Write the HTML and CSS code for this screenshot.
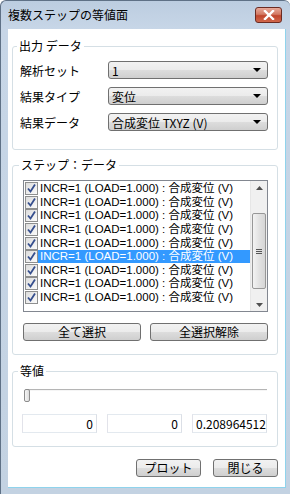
FILE: index.html
```html
<!DOCTYPE html>
<html lang="ja">
<head>
    <meta charset="UTF-8">
    <title>複数ステップの等値面</title>
    <link rel="stylesheet" href="styles.css">
</head>
<body>
<div class="window">
    <div class="titlebar">
        <span class="title">複数ステップの等値面</span>
        <button class="close-btn">
            <svg width="12" height="10" viewBox="0 0 12 10"><path d="M2 1 L10 9 M10 1 L2 9" stroke="#fff" stroke-width="2.4" stroke-linecap="square"/></svg>
        </button>
    </div>

    <div class="client">
        <!-- 出力 データ -->
        <fieldset class="group group-output">
            <legend>出力 データ</legend>
            <div class="field-row">
                <label>解析セット</label>
                <div class="combo"><span>1</span><i class="arrow"></i></div>
            </div>
            <div class="field-row">
                <label>結果タイプ</label>
                <div class="combo"><span>変位</span><i class="arrow"></i></div>
            </div>
            <div class="field-row">
                <label>結果データ</label>
                <div class="combo"><span>合成変位 TXYZ (V)</span><i class="arrow"></i></div>
            </div>
        </fieldset>

        <!-- ステップ : データ -->
        <fieldset class="group group-steps">
            <legend>ステップ：データ</legend>
            <div class="listbox">
                <ul class="items">
                    <li><i class="check"></i><span>INCR=1 (LOAD=1.000) : 合成変位 (V)</span></li>
                    <li><i class="check"></i><span>INCR=1 (LOAD=1.000) : 合成変位 (V)</span></li>
                    <li><i class="check"></i><span>INCR=1 (LOAD=1.000) : 合成変位 (V)</span></li>
                    <li><i class="check"></i><span>INCR=1 (LOAD=1.000) : 合成変位 (V)</span></li>
                    <li><i class="check"></i><span>INCR=1 (LOAD=1.000) : 合成変位 (V)</span></li>
                    <li class="selected"><i class="check"></i><span>INCR=1 (LOAD=1.000) : 合成変位 (V)</span></li>
                    <li><i class="check"></i><span>INCR=1 (LOAD=1.000) : 合成変位 (V)</span></li>
                    <li><i class="check"></i><span>INCR=1 (LOAD=1.000) : 合成変位 (V)</span></li>
                    <li><i class="check"></i><span>INCR=1 (LOAD=1.000) : 合成変位 (V)</span></li>
                </ul>
                <div class="scrollbar">
                    <div class="sb-arrow"><svg width="7" height="4" viewBox="0 0 7 4"><path d="M0 4 L3.5 0 L7 4 Z" fill="#505050"/></svg></div>
                    <div class="sb-track">
                        <div class="sb-thumb"><i></i><i></i><i></i></div>
                    </div>
                    <div class="sb-arrow"><svg width="7" height="4" viewBox="0 0 7 4"><path d="M0 0 L3.5 4 L7 0 Z" fill="#505050"/></svg></div>
                </div>
            </div>
            <div class="btn-row">
                <button class="btn">全て選択</button>
                <button class="btn">全選択解除</button>
            </div>
        </fieldset>

        <!-- 等値 -->
        <fieldset class="group group-value">
            <legend>等値</legend>
            <div class="slider">
                <div class="slider-track"></div>
                <div class="slider-thumb"></div>
            </div>
            <div class="value-row">
                <div class="textbox">0</div>
                <div class="textbox">0</div>
                <div class="textbox">0.208964512</div>
            </div>
        </fieldset>

        <div class="footer">
            <button class="btn btn-small">プロット</button>
            <button class="btn btn-small">閉じる</button>
        </div>
    </div>
</div>
</body>
</html>
```

FILE: styles.css
```css
* {
    box-sizing: border-box;
}

body {
    margin: 0;
    font-family: "Noto Sans CJK JP", "Liberation Sans", sans-serif;
    font-size: 12px;
    color: #000;
    background: #fff;
}

/* ウィンドウ枠 */
.window {
    width: 290px;
    height: 494px;
    display: flex;
    flex-direction: column;
    background: linear-gradient(to bottom, #bccde0, #c7d6e7 28px, #c3d2e2);
    border-top: 1px solid #5f7186;
    border-left: 1px solid #5f7186;
    border-radius: 6px 6px 0 0;
}

.titlebar {
    height: 28px;
    display: flex;
    align-items: center;
    justify-content: space-between;
    padding: 0 8px 0 7px;
}

.title {
    line-height: 14px;
    color: #000;
}

.close-btn {
    width: 27px;
    height: 16px;
    padding: 0;
    display: flex;
    align-items: center;
    justify-content: center;
    border: 1px solid #6b2b22;
    border-radius: 3px;
    background: linear-gradient(to bottom, #e8a99a, #d27a64 45%, #c0452c 55%, #d0684c);
}

.client {
    flex: 1;
    margin: 0 4px 6px 7px;
    background: #fff;
    border-right: 1px solid #8fd3ec;
    border-bottom: 1px solid #8fd3ec;
    padding: 10px 7px 0 4px;
    display: flex;
    flex-direction: column;
}

/* グループボックス */
.group {
    margin: 0;
    border: 1px solid #d5dfe5;
    border-radius: 3px;
}

.group legend {
    padding: 0 2px;
    margin-left: -3px;
    line-height: 14px;
}

.group-output {
    padding: 8px 9px 18px 7px;
}

.field-row {
    display: flex;
    align-items: center;
    height: 18px;
    margin-bottom: 8px;
}

.field-row:last-child {
    margin-bottom: 0;
}

.field-row label {
    flex: 1;
}

.combo {
    flex: none;
    width: 160px;
    height: 18px;
    display: flex;
    align-items: center;
    justify-content: space-between;
    padding: 0 6px 0 3px;
    border: 1px solid #707070;
    border-radius: 3px;
    background: linear-gradient(to bottom, #f2f2f2, #ebebeb 50%, #dddddd 50%, #cfcfcf);
}

.arrow {
    width: 0;
    height: 0;
    border-left: 4px solid transparent;
    border-right: 4px solid transparent;
    border-top: 4px solid #000;
}

.group-steps {
    margin-top: 8px;
    padding: 8px 9px 13px 10px;
}

.group-steps legend {
    margin-left: -4px;
}

.listbox {
    height: 132px;
    display: flex;
    border: 1px solid #828790;
    background: #fff;
}

.items {
    flex: 1;
    list-style: none;
    margin: 0;
    padding: 1px 0 0 1px;
}

.items li {
    display: flex;
    align-items: center;
    height: 13.6px;
    white-space: nowrap;
}

.items li span {
    flex: 1;
    padding-left: 2px;
    font-family: "Liberation Sans", "Noto Sans CJK JP", sans-serif;
    font-size: 11.5px;
    line-height: 13px;
}

.items li.selected span {
    background: #3399ff;
    color: #fff;
}

.check {
    width: 13px;
    height: 13px;
    flex: none;
    border: 1px solid #8e8f8f;
    background:
        url("data:image/svg+xml,%3Csvg xmlns='http://www.w3.org/2000/svg' width='11' height='11'%3E%3Cpath d='M2 5.5 L4.5 8.5 L9 1.5' fill='none' stroke='%23364f8e' stroke-width='1.8'/%3E%3C/svg%3E") center no-repeat,
        linear-gradient(135deg, #dcdcdc, #fbfbfb);
}

.scrollbar {
    width: 17px;
    flex: none;
    display: flex;
    flex-direction: column;
    background: #f0f0f0;
    border-left: 1px solid #e6e6e6;
}

.sb-arrow {
    height: 17px;
    display: flex;
    align-items: center;
    justify-content: center;
}

.sb-track {
    flex: 1;
    padding: 19px 1px 9px;
}

.sb-thumb {
    height: 76px;
    display: flex;
    flex-direction: column;
    align-items: center;
    justify-content: center;
    gap: 1px;
    border: 1px solid #979797;
    border-radius: 2px;
    background: linear-gradient(to right, #f3f3f3, #e2e2e2 50%, #d6d6d6);
}

.sb-thumb i {
    width: 6px;
    height: 1px;
    background: #555;
}

.btn-row {
    display: flex;
    justify-content: space-between;
    margin-top: 11px;
}

.btn {
    width: 118px;
    height: 18px;
    padding: 0;
    font: inherit;
    line-height: 14px;
    border: 1px solid #707070;
    border-radius: 3px;
    background: linear-gradient(to bottom, #f2f2f2, #ebebeb 50%, #dddddd 50%, #cfcfcf);
}

/* 等値 */
.group-value {
    margin-top: 9px;
    padding: 5px 10px 13px 9px;
}

.group-value legend {
    margin-left: -4px;
}

.slider {
    position: relative;
    height: 14px;
}

.slider-track {
    margin: 6px 0 0 4px;
    height: 2px;
    border-top: 1px solid #b5b5b5;
    border-bottom: 1px solid #f5f5f5;
}

.slider-thumb {
    position: absolute;
    left: 2px;
    top: 0;
    width: 6px;
    height: 13px;
    border: 1px solid #8c8c8c;
    border-radius: 2px;
    background: linear-gradient(to right, #f5f5f5, #dcdcdc);
}

.value-row {
    display: flex;
    justify-content: space-between;
    margin-top: 11px;
}

.textbox {
    width: 75px;
    height: 19px;
    padding: 0 3px;
    text-align: right;
    line-height: 17px;
    border: 1px solid #abadb3;
    border-top-color: #e3e9ef;
    border-left-color: #e2e3ea;
    border-right-color: #dbdfe6;
    border-bottom-color: #e3e9ef;
}

.footer {
    display: flex;
    justify-content: flex-end;
    gap: 12px;
    margin-top: 12px;
}

.btn-small {
    width: 65px;
}
```
